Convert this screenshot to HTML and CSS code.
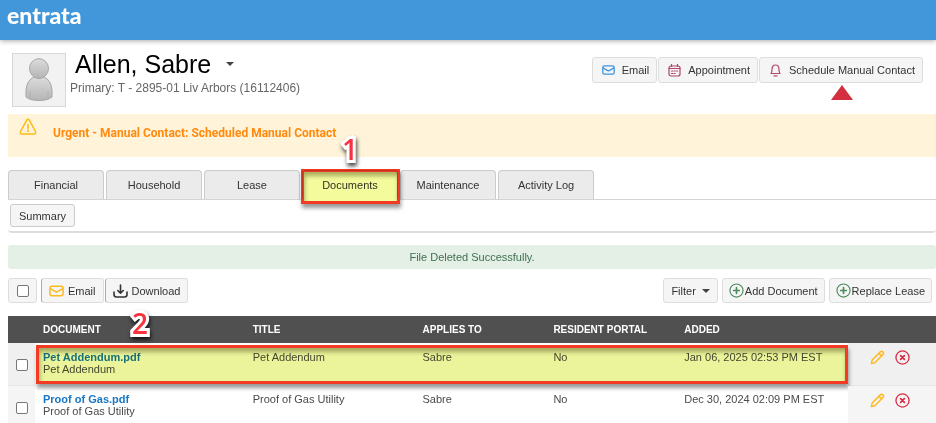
FILE: index.html
```html
<!DOCTYPE html>
<html lang="en">
<head>
<meta charset="utf-8">
<title>Allen, Sabre - Documents</title>
<link rel="stylesheet" href="styles.css">
</head>
<body>
<svg class="defs" aria-hidden="true">
  <symbol id="mail" viewBox="0 0 16 12"><rect x="1" y="1" width="14" height="10" rx="2"/><path d="M1.5 3.5 6.500 6.500Q8 7.400 9.500 6.500L14.500 3.500"/></symbol>
  <symbol id="plus" viewBox="0 0 16 16"><circle cx="8" cy="8" r="7"/><path d="M8 5v6M5 8h6" stroke-width="1.800"/></symbol>
  <symbol id="pencil" viewBox="0 0 16 16"><path d="M1.500 14.500l.8-3.800 8.700-8.700q1.500-1.300 2.800 0t0 2.800L5.200 13.600zM9.500 3.500l3 3"/></symbol>
  <symbol id="remove" viewBox="0 0 16 16"><circle cx="8" cy="8" r="7"/><path d="M6 6l4 4M10 6l-4 4" stroke-width="1.800"/></symbol>
</svg>
<header class="topbar"><a class="logo" href="#">entrata</a></header>
<main class="page">
  <section class="profile">
    <svg class="avatar" viewBox="0 0 54 54" role="img" aria-label="Resident photo">
      <defs><linearGradient id="skin" x1="0" y1="0" x2="0" y2="1"><stop offset="0" stop-color="#dcdcdc"/><stop offset="1" stop-color="#b5b5b5"/></linearGradient></defs>
      <rect x=".5" y=".5" width="53" height="53" fill="#f2f2f2" stroke="#d9d9d9"/>
      <path d="M14 44V37Q15 27 22 24Q27 27 32 24Q39 27 40 37V44Q36 47.500 27 47.500T14 44Z" fill="url(#skin)" stroke="#a6a6a6"/>
      <path d="M18 46V38M36 46V38" stroke="#b0b0b0" fill="none"/>
      <ellipse cx="27" cy="15.500" rx="9.500" ry="9.800" fill="url(#skin)" stroke="#a6a6a6"/>
    </svg>
    <div class="identity">
      <h1>Allen, Sabre <button class="caret-button" aria-label="Switch resident"><span class="caret"></span></button></h1>
      <p>Primary: T - 2895-01 Liv Arbors (16112406)</p>
    </div>
    <div class="contact-actions">
      <button class="btn"><svg class="icon blue" width="13" height="10"><use href="#mail"/></svg>Email</button>
      <button class="btn"><svg class="icon wine" width="13" height="13" viewBox="0 0 13 13"><rect x="1" y="2" width="11" height="10" rx="2"/><path d="M1 4.500h11M3.500.500v2M9.500.500v2"/><path d="M3.500 7h1.200M6 7h1.200M8.500 7h1.200M3.500 9.500h1.200M6 9.500h1.200"/></svg>Appointment</button>
      <button class="btn">
        <svg class="icon wine" width="13" height="13" viewBox="0 0 13 13"><path d="M2 9.500Q3 8 3 5.500Q3 1 6.500 1T10 5.500Q10 8 11 9.500ZM5 11.800h3"/></svg>Schedule Manual Contact
        <svg class="pointer" width="22" height="15" viewBox="0 0 22 15" aria-hidden="true"><path d="M11 0 22 15H0z" fill="#d32f3f"/></svg>
      </button>
    </div>
  </section>

  <section class="alert" role="alert">
    <svg class="icon amber" width="18" height="18" viewBox="0 0 18 18"><path d="M7.600 2.300 1.500 13.500Q.8 16 3 16H15Q17.200 16 16.500 13.500L10.400 2.300Q9 .3 7.600 2.300ZM9 6.500v4M9 12v1.500" stroke-width="1.500"/></svg>
    <strong>Urgent - Manual Contact: Scheduled Manual Contact</strong>
  </section>

  <nav class="tabs">
    <a href="#">Financial</a>
    <a href="#">Household</a>
    <a href="#">Lease</a>
    <a href="#" class="active" aria-current="page">Documents<span class="marker tab-marker"></span><span class="step step-one">1</span></a>
    <a href="#">Maintenance</a>
    <a href="#">Activity Log</a>
  </nav>
  <div class="subnav"><button class="btn summary">Summary</button></div>

  <p class="success" role="status">File Deleted Successfully.</p>

  <div class="toolbar">
    <label class="btn check"><input type="checkbox" aria-label="Select all documents"></label>
    <button class="btn bulk"><svg class="icon gold" width="15" height="12"><use href="#mail"/></svg>Email</button>
    <button class="btn bulk"><svg class="icon dark" width="15" height="14" viewBox="0 0 15 14"><path d="M1 8v2.500Q1 13 3.500 13h8Q14 13 14 10.500V8M7.500 1v8M4.800 6.500 7.500 9.200 10.200 6.500" stroke-width="1.600"/></svg>Download</button>
    <span class="spacer"></span>
    <button class="btn filter">Filter <span class="caret"></span></button>
    <button class="btn add"><svg class="icon green" width="15" height="15"><use href="#plus"/></svg>Add Document</button>
    <button class="btn add"><svg class="icon green" width="15" height="15"><use href="#plus"/></svg>Replace Lease</button>
  </div>

  <table class="documents">
    <colgroup><col class="c-check"><col class="c-doc"><col class="c-title"><col class="c-applies"><col class="c-portal"><col><col class="c-actions"></colgroup>
    <thead>
      <tr><th></th><th>DOCUMENT<span class="step step-two">2</span></th><th>TITLE</th><th>APPLIES TO</th><th>RESIDENT PORTAL</th><th>ADDED</th><th></th></tr>
    </thead>
    <tbody>
      <tr class="shaded">
        <td class="select"><input type="checkbox" aria-label="Select Pet Addendum.pdf"></td>
        <td><a href="#">Pet Addendum.pdf</a><br>Pet Addendum</td>
        <td>Pet Addendum</td><td>Sabre</td><td>No</td><td>Jan 06, 2025 02:53 PM EST</td>
        <td class="actions"><button aria-label="Edit"><svg class="icon gold" width="15" height="15"><use href="#pencil"/></svg></button><button aria-label="Delete"><svg class="icon red" width="15" height="15"><use href="#remove"/></svg></button><span class="marker row-marker"></span></td>
      </tr>
      <tr>
        <td class="select"><input type="checkbox" aria-label="Select Proof of Gas.pdf"></td>
        <td><a href="#">Proof of Gas.pdf</a><br>Proof of Gas Utility</td>
        <td>Proof of Gas Utility</td><td>Sabre</td><td>No</td><td>Dec 30, 2024 02:09 PM EST</td>
        <td class="actions"><button aria-label="Edit"><svg class="icon gold" width="15" height="15"><use href="#pencil"/></svg></button><button aria-label="Delete"><svg class="icon red" width="15" height="15"><use href="#remove"/></svg></button></td>
      </tr>
    </tbody>
  </table>
</main>
</body>
</html>
```
FILE: styles.css
```css
* { box-sizing: border-box; }
body {
  margin: 0;
  height: 100vh;
  overflow: hidden;
  background: #fff;
  color: #333;
  font: 11px/12px "Liberation Sans", Arial, sans-serif;
}
button { font: inherit; color: inherit; }
a { text-decoration: none; }
.defs { position: absolute; width: 0; height: 0; }

.topbar {
  height: 40px;
  padding: 3px 7px;
  background: #4297db;
  box-shadow: 0 1px 5px rgba(0, 0, 0, .35);
}
.logo { color: #fff; font: 900 23px/25px Lato, sans-serif; }
.page { padding: 13px 0 0 8px; }

.icon { flex: none; fill: none; stroke: currentColor; stroke-width: 1.2; stroke-linecap: round; stroke-linejoin: round; }
.blue { color: #3f94dd; stroke-width: 1.6; }
.wine { color: #b0476b; stroke-width: 1.2; }
.gold { color: #fdba22; stroke-width: 1.6; }
.amber { color: #fdbb12; }
.green { color: #4c8a5c; }
.red { color: #d82c43; stroke-width: 1.4; }
.dark { color: #333; }

.profile { display: flex; height: 61px; padding: 0 13px 0 4px; }
.avatar { width: 54px; height: 54px; flex: none; }
.identity { flex: 1; padding-left: 4px; }
h1 { display: flex; align-items: center; margin: 0 0 0 5px; color: #000; font-size: 25px; font-weight: 400; line-height: 22px; }
.caret-button { display: flex; padding: 4px; margin-left: 11px; border: 0; background: none; }
.caret { display: inline-block; border: 4px solid transparent; border-top-color: #444; border-bottom: 0; }
.identity p { margin: 5px 0 0; color: #666; font-size: 12px; line-height: 16px; }
.contact-actions { display: flex; align-items: flex-start; gap: 1px; padding-top: 4px; }

.btn {
  display: flex;
  align-items: center;
  height: 25px;
  padding: 0 8px;
  border: 1px solid #ddd;
  border-radius: 3px;
  background: #f5f5f5;
}
.contact-actions .btn { position: relative; height: 26px; gap: 7px; padding: 0 7px 0 9px; }
.pointer { position: absolute; left: 71px; top: 27px; }

.alert { display: flex; gap: 16px; height: 43px; padding: 4px 11px; background: #fff4da; }
.alert strong { padding-top: 7px; color: #ff8a0d; font: 700 12px/16px Roboto, "Liberation Sans", sans-serif; }

.tabs { display: flex; gap: 2px; margin-top: 13px; border-bottom: 1px solid #d4d4d4; }
.tabs a {
  position: relative;
  width: 96px;
  height: 29px;
  border: 1px solid #ccc;
  border-bottom: 0;
  border-radius: 4px 4px 0 0;
  background: #ebebeb;
  color: #333;
  line-height: 28px;
  text-align: center;
}
.tabs .active { background: #fff; z-index: 1; }
.subnav { padding: 4px 2px; border-bottom: 2px solid #ddd; border-radius: 4px; }
.summary { height: 23px; border-color: #ccc; }

.success {
  margin: 12px 0 9px;
  padding: 6px 4px;
  border-radius: 3px;
  background: #e4efe5;
  color: #3f7051;
  text-align: center;
}

.toolbar { display: flex; gap: 4px; padding-right: 4px; margin-bottom: 13px; }
.check { width: 29px; justify-content: center; padding: 0; }
.bulk { gap: 4px; padding: 0 7px; border-left: 1px solid #aaa; }
.bulk + .bulk { margin-left: -3px; }
.spacer { flex: 1; }
.filter { gap: 6px; padding: 0 7px; }
.add { gap: 1px; padding: 0 6px; }
input[type="checkbox"] {
  appearance: none;
  display: block;
  width: 12px;
  height: 12px;
  margin: 0;
  border: 1px solid #777;
  border-radius: 2px;
  background: #fff;
}

.documents { width: 100%; table-layout: fixed; border-collapse: collapse; color: #4a4a4a; }
.c-check { width: 27px; }
.c-doc { width: 22.6%; }
.c-title { width: 18.3%; }
.c-applies, .c-portal { width: 14.1%; }
.c-actions { width: 88px; }
th { position: relative; height: 27px; padding: 0 8px; background: #505050; color: #fff; font-size: 10px; text-align: left; }
td { height: 42px; padding: 8px 8px 0; vertical-align: top; }
td a { color: #1976c5; font-weight: 700; }
tr { position: relative; }
.select, .actions { background: #f5f5f5; }
.shaded .select, .shaded .actions { background: #f0f0f0; border-bottom: 1px solid #e6e6e6; }
.select { padding-top: 16px; }
.actions { padding: 7px 22px 0; white-space: nowrap; }
.actions button { width: 15px; height: 15px; padding: 0; margin-right: 10px; border: 0; background: none; }
.actions button + button { margin-right: 0; }
.actions svg { display: block; }

.marker {
  position: absolute;
  border: 3px solid #f23a24;
  background: #f4fb9d;
  box-shadow: 1px 4px 4px rgba(0, 0, 0, .4), inset 1px 4px 4px rgba(60, 60, 0, .4);
  mix-blend-mode: multiply;
  pointer-events: none;
}
.tab-marker { inset: -2px -3px -5px -2px; }
.row-marker { left: 28px; right: 88px; top: 2px; height: 39px; background: #ebf49b; }
.step {
  position: absolute;
  z-index: 2;
  color: #f8333f;
  font: 600 28px/28px "Open Sans", "Liberation Sans", sans-serif;
  -webkit-text-stroke: 6px #fff;
  paint-order: stroke fill;
  filter: drop-shadow(1px 3px 2px rgba(0, 0, 0, .75));
}
.step-one { left: 39px; top: -36px; }
.step-two { left: 97px; top: -7px; }
```
